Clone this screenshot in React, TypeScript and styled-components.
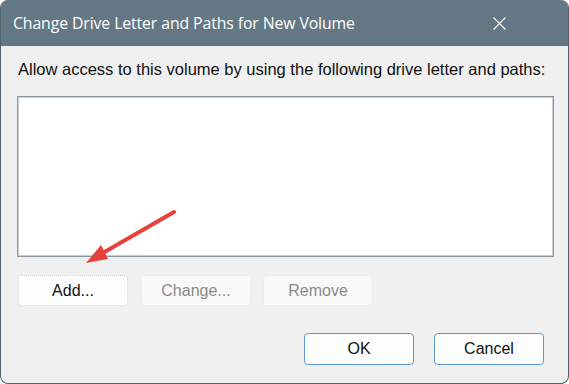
import styled, { createGlobalStyle } from 'styled-components';

const GlobalStyle = createGlobalStyle`
  html, body {
    margin: 0;
    padding: 0;
    background: #ffffff;
  }
  * {
    box-sizing: border-box;
  }
`;

const Window = styled.div`
  position: relative;
  width: 569px;
  height: 384px;
  display: flex;
  flex-direction: column;
  background: #f0f0f0;
  border: 1px solid #4f626f;
  border-top: none;
  border-radius: 8px;
  overflow: hidden;
  font-family: "Liberation Sans", Arial, sans-serif;
`;

const TitleBar = styled.div`
  height: 46px;
  flex-shrink: 0;
  display: flex;
  align-items: center;
  padding-left: 12px;
  background: #637784;
  color: #ffffff;
  font-family: "Open Sans", "Noto Sans", sans-serif;
  font-size: 15.8px;
`;

const Title = styled.span`
  flex: 1;
  letter-spacing: -0.1px;
`;

const CloseButton = styled.div`
  width: 46px;
  height: 46px;
  margin-right: 46px;
  display: flex;
  align-items: center;
  justify-content: center;
`;

const Body = styled.div`
  flex: 1;
  display: flex;
  flex-direction: column;
  padding: 14px 14px 0 16px;
`;

const Label = styled.div`
  font-size: 16.5px;
  color: #111;
  line-height: 19px;
  padding-left: 1px;
`;

const ListBox = styled.div`
  margin-top: 17px;
  height: 161px;
  width: 537px;
  background: #ffffff;
  border: 1px solid #8d979f;
  box-shadow: inset 0 0 0 1px #c9cdd1;
`;

const ButtonRow = styled.div<{ $end?: boolean; $top: number }>`
  display: flex;
  justify-content: ${p => (p.$end ? 'flex-end' : 'flex-start')};
  gap: ${p => (p.$end ? 20 : 12)}px;
  margin-top: ${p => p.$top}px;
  padding-left: 1px;
  padding-right: ${p => (p.$end ? 10 : 0)}px;
`;

const Button = styled.div<{ $variant: 'normal' | 'disabled' | 'primary' }>`
  width: 110px;
  height: ${p => (p.$variant === 'primary' ? 32 : 31)}px;
  display: flex;
  align-items: center;
  justify-content: center;
  border-radius: 4px;
  font-size: 16px;
  background: ${p => (p.$variant === 'disabled' ? '#f9f9f9' : '#fdfdfd')};
  color: ${p => (p.$variant === 'disabled' ? '#8a8a8a' : '#111')};
  border: 1px ${p => (p.$variant === 'normal' ? 'dotted' : 'solid')}
    ${p =>
      p.$variant === 'primary'
        ? '#5d9ad3'
        : p.$variant === 'disabled'
        ? '#ececec'
        : '#d3d3d3'};
`;

const Arrow = styled.svg`
  position: absolute;
  left: 0;
  top: 0;
  pointer-events: none;
`;

export default function App() {
  return (
    <>
      <GlobalStyle />
      <Window>
        <TitleBar>
          <Title>Change Drive Letter and Paths for New Volume</Title>
          <CloseButton>
            <svg width="13" height="13" viewBox="0 0 13 13">
              <path d="M0.5 0.5 L12.5 12.5 M12.5 0.5 L0.5 12.5" stroke="#ffffff" strokeWidth="1.1" fill="none" />
            </svg>
          </CloseButton>
        </TitleBar>
        <Body>
          <Label>Allow access to this volume by using the following drive letter and paths:</Label>
          <ListBox />
          <ButtonRow $top={18}>
            <Button $variant="normal">Add...</Button>
            <Button $variant="disabled" style={{ marginLeft: 1 }}>Change...</Button>
            <Button $variant="disabled">Remove</Button>
          </ButtonRow>
          <ButtonRow $top={27} $end>
            <Button $variant="primary">OK</Button>
            <Button $variant="primary">Cancel</Button>
          </ButtonRow>
        </Body>
        <Arrow width="569" height="384" viewBox="0 0 569 384">
          <path d="M173 212 L100 254" stroke="#e8413c" strokeWidth="4" strokeLinecap="round" />
          <polygon points="85,263 100,245 107,259" fill="#e8413c" />
        </Arrow>
      </Window>
    </>
  );
}
